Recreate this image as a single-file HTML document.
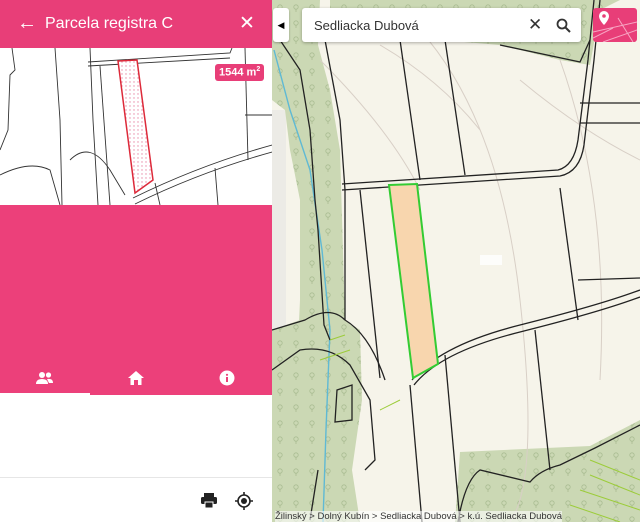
<!DOCTYPE html>
<html><head><meta charset="utf-8"><style>
body{margin:0;width:640px;height:522px;overflow:hidden;position:relative;font-family:"Liberation Sans",Arial,sans-serif;background:#f5f3e8}
.abs{position:absolute}
</style></head><body>
<svg class="abs" style="left:0;top:0" width="640" height="522" viewBox="0 0 640 522">
<defs>
<pattern id="tr" width="16" height="16" patternUnits="userSpaceOnUse"><rect width="16" height="16" fill="#cbd8b4"/><circle cx="8" cy="7" r="2.2" fill="none" stroke="#a9bc92" stroke-width="0.8"/><line x1="8" y1="9" x2="8" y2="12" stroke="#a9bc92" stroke-width="0.8"/></pattern>
<pattern id="dt" width="4" height="4" patternUnits="userSpaceOnUse"><rect width="4" height="4" fill="#fff"/><circle cx="2" cy="2" r="0.7" fill="#e88aa8"/></pattern>
</defs>
<rect x="272" y="0" width="368" height="522" fill="#f6f4ea"/>
<rect x="272" y="110" width="14" height="412" fill="#ecebe6"/>
<!-- forest left -->
<polygon points="272,0 320,0 318,45 330,90 340,150 345,320 360,330 362,400 352,470 360,522 290,522 300,300 300,200 290,150 285,110 272,100" fill="url(#tr)"/>
<polygon points="272,330 300,320 310,522 272,522" fill="url(#tr)"/>
<polygon points="460,452 590,446 640,420 640,522 455,522" fill="url(#tr)"/>
<polygon points="330,0 620,0 600,10 590,65 560,60 500,45 440,40 380,30 330,20" fill="url(#tr)"/>
<!-- stream -->
<polyline points="274,50 290,110 310,170 322,250 330,330 326,430 323,522" fill="none" stroke="#5fb9d4" stroke-width="1.4"/>
<!-- contour faint -->
<g fill="none" stroke="#d8cfc6" stroke-width="1">
<path d="M320,60 Q390,130 420,190"/><path d="M380,45 Q440,80 480,130"/><path d="M520,80 Q580,130 640,160"/>
<path d="M420,30 Q500,120 520,300 T510,522"/><path d="M560,60 Q610,200 600,380"/>
</g>
<!-- black lines -->
<g fill="none" stroke="#222" stroke-width="1.3">
<path d="M280,40 L300,70 L310,130 L315,200 L318,230 L324,325 L330,340"/>
<path d="M325,40 L340,120 L345,190 L345,320"/>
<path d="M342,184 L558,170 Q574,166 578,140 L588,60 L594,0"/>
<path d="M342,190 L560,176 Q580,172 584,145 L594,60 L600,0"/>
<path d="M412,380 Q440,345 520,325 Q600,305 640,290"/>
<path d="M414,385 Q440,352 520,332 Q600,312 640,297"/>
<path d="M360,190 L380,378"/>
<path d="M445,40 L465,175"/><path d="M400,40 L420,180"/>
<path d="M500,45 L580,62 L590,40"/>
<path d="M560,188 L578,320"/><path d="M580,103 L640,103"/><path d="M580,123 L640,123"/><path d="M578,280 L640,278"/>
<path d="M535,330 L550,470"/><path d="M410,385 L422,522"/><path d="M445,355 L460,522"/>
<path d="M272,330 L305,320 Q330,305 345,320 Q370,335 385,380"/>
<path d="M272,370 L300,350 Q330,345 350,365 L370,400 L375,460 L365,470"/>
<path d="M337,390 L352,385 L352,420 L335,422 Z"/>
<path d="M458,522 Q465,480 480,470 L530,482 Q540,470 560,465 L595,448 L640,425"/>
<path d="M310,520 L318,470"/>
</g>
<g fill="none" stroke="#9ccc3a" stroke-width="1">
<path d="M330,340 L345,335 M320,360 L350,350 M380,410 L400,400 M590,460 L640,480 M590,475 L640,495 M580,490 L640,510 M570,505 L620,522"/>
</g>
<polygon points="389,185 417,184 438,364 413,378" fill="#f8d6ae" stroke="#33cc33" stroke-width="2"/>
<rect x="480" y="255" width="22" height="10" fill="#fff" opacity="0.8"/>
</svg>

<!-- left panel -->
<div class="abs" style="left:0;top:0;width:272px;height:522px;background:#fff">
 <div class="abs" style="left:0;top:0;width:272px;height:48px;background:#e83e78;color:#fff">
  <div class="abs" style="left:17px;top:12px;font-size:20px">&#8592;</div>
  <div class="abs" style="left:45px;top:15px;font-size:16px">Parcela registra C</div>
  <div class="abs" style="left:239px;top:12px;font-size:19px">&#10005;</div>
 </div>
 <svg class="abs" style="left:0;top:48px" width="272" height="157" viewBox="0 48 272 157">
  <g fill="none" stroke="#333" stroke-width="0.9">
   <path d="M88,62 L230,53 L232,48"/><path d="M88,66 L230,58"/>
   <path d="M55,48 L60,120 L62,205"/><path d="M90,48 L93,120 L98,205"/><path d="M100,66 L110,205"/>
   <path d="M12,48 L15,70 L10,75 L8,130 L0,150"/><path d="M70,160 Q90,140 110,170 L125,195"/>
   <path d="M133,198 Q200,165 272,145"/><path d="M135,204 Q200,172 272,152"/>
   <path d="M245,48 L248,160"/><path d="M245,115 L272,115"/><path d="M0,175 Q30,160 50,170 L60,205"/>
   <path d="M215,168 L218,205"/><path d="M155,183 L160,205"/>
  </g>
  <polygon points="118,61 137,60 153,180 135,193" fill="url(#dt)" stroke="#dd2a3a" stroke-width="1.5"/>
 </svg>
 <div class="abs" style="left:215px;top:64px;background:#e83e78;color:#fff;font-size:11px;font-weight:bold;padding:2px 4px;border-radius:3px">1544 m<sup style="font-size:7px">2</sup></div>
 <div class="abs" style="left:0;top:205px;width:272px;height:190px;background:#ec407a"></div>
 <div class="abs" style="left:0;top:393px;width:90px;height:3px;background:#fff"></div>
 <svg class="abs" style="left:36px;top:371px" width="18" height="14" viewBox="0 0 18 14"><circle cx="6" cy="4" r="3" fill="#fff"/><circle cx="12.5" cy="4" r="2.6" fill="#fff"/><path d="M0,13 Q0,8 6,8 Q12,8 12,13Z M11,8 Q17,7 17,12 L13,12Z" fill="#fff"/></svg>
 <svg class="abs" style="left:128px;top:371px" width="16" height="14" viewBox="0 0 16 14"><path d="M8,0 L16,7 L13.5,7 L13.5,14 L10,14 L10,9 L6,9 L6,14 L2.5,14 L2.5,7 L0,7Z" fill="#fff"/></svg>
 <svg class="abs" style="left:219px;top:370px" width="16" height="16" viewBox="0 0 16 16"><circle cx="8" cy="8" r="7.5" fill="#fff"/><rect x="7" y="7" width="2" height="5" fill="#ec407a"/><circle cx="8" cy="4.8" r="1.1" fill="#ec407a"/></svg>
 <div class="abs" style="left:0;top:477px;width:272px;height:1px;background:#e6e6e6"></div>
 <svg class="abs" style="left:201px;top:493px" width="16" height="15" viewBox="0 0 16 15"><rect x="3" y="0" width="10" height="4" fill="#222"/><rect x="0" y="4" width="16" height="7" rx="1.5" fill="#222"/><rect x="4" y="9" width="8" height="6" fill="#222" stroke="#fff" stroke-width="1"/></svg>
 <svg class="abs" style="left:235px;top:492px" width="18" height="18" viewBox="0 0 18 18"><circle cx="9" cy="9" r="6" fill="none" stroke="#222" stroke-width="1.6"/><circle cx="9" cy="9" r="3" fill="#222"/><path d="M9,0V3M9,15V18M0,9H3M15,9H18" stroke="#222" stroke-width="1.6"/></svg>
</div>
<!-- right overlays -->
<div class="abs" style="left:273px;top:8px;width:16px;height:34px;background:#fff;border-radius:3px;box-shadow:0 1px 2px rgba(0,0,0,.3);font-size:9px;text-align:center;line-height:34px">&#9664;</div>
<div class="abs" style="left:302px;top:8px;width:279px;height:34px;background:#fff;border-radius:3px;box-shadow:0 1px 3px rgba(0,0,0,.3)">
 <div class="abs" style="left:12px;top:10px;font-size:13px;color:#333">Sedliacka Dubová</div>
 <div class="abs" style="left:226px;top:7px;font-size:17px;color:#333">&#10005;</div>
 <svg class="abs" style="left:254px;top:10px" width="15" height="15" viewBox="0 0 15 15"><circle cx="6" cy="6" r="4.5" fill="none" stroke="#333" stroke-width="1.8"/><path d="M9.5,9.5 L14,14" stroke="#333" stroke-width="2"/></svg>
</div>
<div class="abs" style="left:593px;top:8px;width:44px;height:34px;background:#e83e78;border-radius:3px;overflow:hidden">
 <svg width="44" height="34" viewBox="0 0 44 34"><g stroke="#f7a6c3" stroke-width="1" fill="none"><path d="M0,24 L44,14 M10,34 L44,22 M25,10 L40,34 M0,30 L20,20"/></g><path d="M11,3 a5,5 0 0 1 5,5 c0,4 -5,9 -5,9 c0,0 -5,-5 -5,-9 a5,5 0 0 1 5,-5z" fill="#fff"/><circle cx="11" cy="8" r="1.8" fill="#e83e78"/></svg>
</div>
<div class="abs" style="left:275px;top:511px;font-size:9.5px;color:#333;background:rgba(255,255,255,.6)">Žilinský &gt; Dolný Kubín &gt; Sedliacka Dubová &gt; k.ú. Sedliacka Dubová</div>
</body></html>
